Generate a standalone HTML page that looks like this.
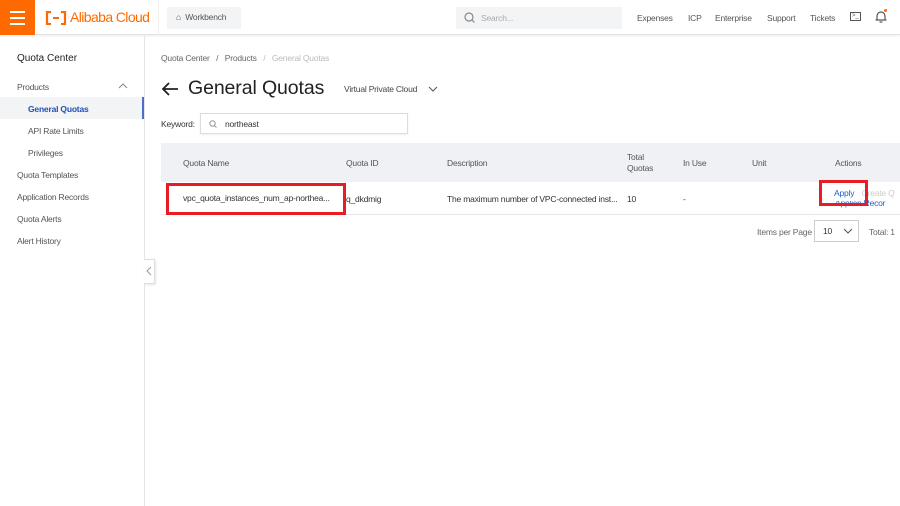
<!DOCTYPE html>
<html><head><style>
*{margin:0;padding:0;box-sizing:border-box}
body{width:900px;height:506px;overflow:hidden;background:#fff;font-family:"Liberation Sans",sans-serif;color:#333;position:relative}
.a{position:absolute;white-space:nowrap}
.s{font-size:8.5px;letter-spacing:-0.2px}
</style></head><body>
<!-- header -->
<div class="a" style="left:0;top:0;width:900px;height:35px;background:#fff;border-bottom:1px solid #e3e3e3;box-shadow:0 1px 2px rgba(0,0,0,.08)"></div>
<div class="a" style="left:0;top:0;width:35px;height:35px;background:#ff6a00"></div>
<div class="a" style="left:10px;top:11px;width:15px;height:2px;background:#fff"></div>
<div class="a" style="left:10px;top:17px;width:15px;height:2px;background:#fff"></div>
<div class="a" style="left:10px;top:23px;width:15px;height:2px;background:#fff"></div>
<svg class="a" style="left:45px;top:11px" width="22" height="14" viewBox="0 0 22 14"><path d="M6 1H2V13H6M16 1H20V13H16" fill="none" stroke="#ff6a00" stroke-width="2.2"/><path d="M8 7H14" stroke="#ff6a00" stroke-width="2"/></svg>
<div class="a" style="left:70px;top:9px;font-size:14px;color:#ff6a00;letter-spacing:-0.6px">Alibaba Cloud</div>
<div class="a" style="left:158px;top:0;width:1px;height:35px;background:#eee"></div>
<div class="a" style="left:167px;top:7px;width:74px;height:22px;background:#f3f4f6"></div>
<div class="a s" style="left:176px;top:12px;color:#555">⌂&nbsp; Workbench</div>
<div class="a" style="left:456px;top:7px;width:166px;height:22px;background:#f3f4f6"></div>
<svg class="a" style="left:464px;top:12px" width="11" height="11"><circle cx="5" cy="5" r="4" fill="none" stroke="#888" stroke-width="1.2"/><path d="M8 8L10.5 10.5" stroke="#888" stroke-width="1.2"/></svg>
<div class="a s" style="left:481px;top:13px;color:#aaa">Search...</div>
<div class="a s" style="left:637px;top:13px;color:#555">Expenses</div>
<div class="a s" style="left:688px;top:13px;color:#555">ICP</div>
<div class="a s" style="left:715px;top:13px;color:#555">Enterprise</div>
<div class="a s" style="left:767px;top:13px;color:#555">Support</div>
<div class="a s" style="left:810px;top:13px;color:#555">Tickets</div>
<div class="a" style="left:850px;top:12px;width:11px;height:9px;border:1.2px solid #555"></div>
<div class="a" style="left:852px;top:13px;font-size:6px;color:#555">&gt;_</div>
<svg class="a" style="left:875px;top:10px" width="12" height="14"><path d="M2 10V6a4 4 0 0 1 8 0v4h1.5H0.5" fill="none" stroke="#555" stroke-width="1.2"/><path d="M4.5 12h3" stroke="#555" stroke-width="1.2"/></svg>
<div class="a" style="left:884px;top:9px;width:3px;height:3px;border-radius:50%;background:#ff6a00"></div>
<!-- sidebar -->
<div class="a" style="left:144px;top:36px;width:1px;height:470px;background:#e5e5e5"></div>
<div class="a" style="left:17px;top:53px;font-size:10px;color:#222">Quota Center</div>
<div class="a s" style="left:17px;top:82px;color:#555">Products</div>
<svg class="a" style="left:118px;top:83px" width="10" height="6"><path d="M1 5L5 1L9 5" fill="none" stroke="#888"/></svg>
<div class="a" style="left:0;top:97px;width:144px;height:22px;background:#f3f4f6;border-right:2px solid #4a6fc6"></div>
<div class="a s" style="left:28px;top:104px;color:#1f4fb5;font-weight:bold">General Quotas</div>
<div class="a s" style="left:28px;top:126px;color:#555">API Rate Limits</div>
<div class="a s" style="left:28px;top:148px;color:#555">Privileges</div>
<div class="a s" style="left:17px;top:170px;color:#555">Quota Templates</div>
<div class="a s" style="left:17px;top:192px;color:#555">Application Records</div>
<div class="a s" style="left:17px;top:214px;color:#555">Quota Alerts</div>
<div class="a s" style="left:17px;top:236px;color:#555">Alert History</div>
<div class="a" style="left:144px;top:259px;width:11px;height:25px;background:#fff;border:1px solid #ddd;border-left:none;box-shadow:1px 1px 2px rgba(0,0,0,.1)"></div>
<svg class="a" style="left:146px;top:266px" width="6" height="10"><path d="M5 1L1 5L5 9" fill="none" stroke="#999"/></svg>
<!-- content -->
<div class="a s" style="left:161px;top:53px;color:#666">Quota Center &nbsp;&nbsp;/&nbsp;&nbsp; Products &nbsp;&nbsp;<span style="color:#bbb">/&nbsp;&nbsp; General Quotas</span></div>
<svg class="a" style="left:161px;top:82px" width="18" height="14"><path d="M17 7H2M8 1L2 7L8 13" fill="none" stroke="#222" stroke-width="1.8"/></svg>
<div class="a" style="left:188px;top:77px;font-size:19.5px;color:#222;letter-spacing:-0.1px">General Quotas</div>
<div class="a s" style="left:344px;top:84px;color:#444">Virtual Private Cloud</div>
<svg class="a" style="left:428px;top:86px" width="10" height="6"><path d="M1 1L5 5L9 1" fill="none" stroke="#555"/></svg>
<div class="a s" style="left:161px;top:119px;color:#333">Keyword:</div>
<div class="a" style="left:200px;top:113px;width:208px;height:21px;border:1px solid #ddd;box-shadow:0 1px 2px rgba(0,0,0,.06)"></div>
<svg class="a" style="left:209px;top:120px" width="8" height="8"><circle cx="3.5" cy="3.5" r="2.7" fill="none" stroke="#999"/><path d="M5.5 5.5L7.5 7.5" stroke="#999"/></svg>
<div class="a s" style="left:225px;top:119px;color:#333">northeast</div>
<div class="a" style="left:161px;top:143px;width:739px;height:39px;background:#eff1f5"></div>
<div class="a" style="left:161px;top:214px;width:739px;height:1px;background:#e8e8e8"></div>
<div class="a s" style="left:183px;top:158px;color:#555">Quota Name</div>
<div class="a s" style="left:346px;top:158px;color:#555">Quota ID</div>
<div class="a s" style="left:447px;top:158px;color:#555">Description</div>
<div class="a s" style="left:627px;top:152px;color:#555;line-height:11px">Total<br>Quotas</div>
<div class="a s" style="left:683px;top:158px;color:#555">In Use</div>
<div class="a s" style="left:752px;top:158px;color:#555">Unit</div>
<div class="a s" style="left:835px;top:158px;color:#555">Actions</div>
<div class="a s" style="left:183px;top:193px;color:#333">vpc_quota_instances_num_ap-northea...</div>
<div class="a s" style="left:346px;top:194px;color:#333">q_dkdmig</div>
<div class="a s" style="left:447px;top:194px;color:#333">The maximum number of VPC-connected inst...</div>
<div class="a s" style="left:627px;top:194px;color:#333">10</div>
<div class="a s" style="left:683px;top:194px;color:#333">-</div>
<div class="a s" style="left:835px;top:188px;color:#1f5fc9">Apply <span style="color:#ccc">| Create Q</span></div>
<div class="a s" style="left:835px;top:198px;color:#1f5fc9">Applic<span>n Recor</span></div>
<div class="a" style="left:166px;top:183px;width:180px;height:32px;border:3.5px solid #e81c24"></div>
<div class="a" style="left:819px;top:180px;width:49px;height:26px;border:3.5px solid #e81c24;background:transparent"></div>
<div class="a" style="left:825px;top:185px;width:37px;height:16px;background:#fff"></div>
<div class="a s" style="left:834px;top:188px;color:#1f5fc9">Apply</div>
<div class="a s" style="left:757px;top:227px;color:#666">Items per Page</div>
<div class="a" style="left:814px;top:220px;width:45px;height:22px;border:1px solid #ccc"></div>
<div class="a s" style="left:823px;top:226px;color:#333">10</div>
<svg class="a" style="left:843px;top:228px" width="10" height="6"><path d="M1 1L5 5L9 1" fill="none" stroke="#555"/></svg>
<div class="a s" style="left:869px;top:227px;color:#666">Total: 1</div>
</body></html>
